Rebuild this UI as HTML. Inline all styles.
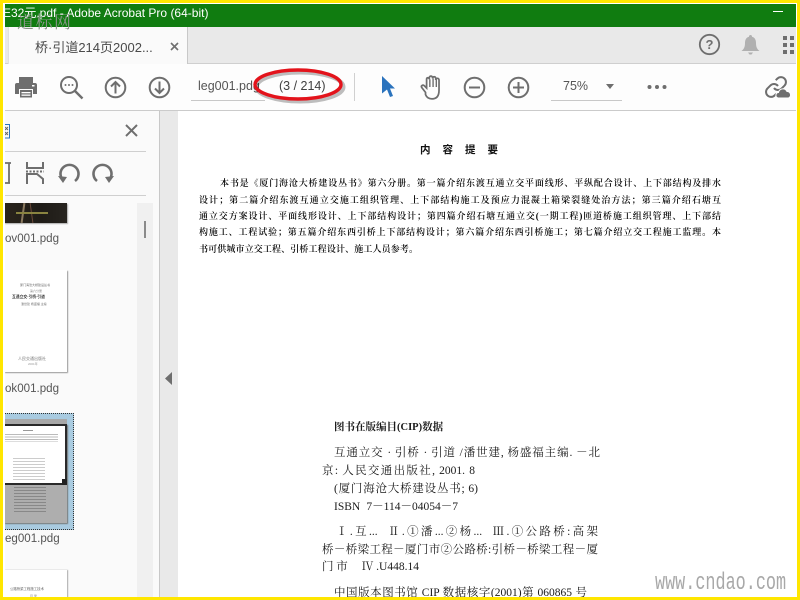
<!DOCTYPE html>
<html><head><meta charset="utf-8">
<style>
html,body{margin:0;padding:0;width:800px;height:600px;overflow:hidden;background:#fff;font-family:"Liberation Sans","Noto Sans CJK SC",sans-serif}
.a{position:absolute;white-space:nowrap}
.doc{font-family:"Liberation Serif","Noto Serif CJK SC",serif;color:#111}
.p1{font-size:9px;line-height:17px;color:#000;font-weight:600;white-space:normal;text-align:justify;text-align-last:justify}
.p2{font-size:11.5px;line-height:18px;color:#1a1a1a;white-space:normal;text-align:justify;text-align-last:justify}
.lbl{font-size:12.3px;color:#555;transform:scaleX(.94);transform-origin:left top}
</style></head><body>
<div class="a" style="left:0;top:0;width:800px;height:600px;overflow:hidden">
<div class="a" style="left:4px;top:4px;width:793px;height:23px;background:#107c10"></div>
<div class="a" style="left:3px;top:4px;color:#fff;font-size:12px;line-height:19px;width:300px;overflow:hidden">E32元.pdf - Adobe Acrobat Pro (64-bit)</div>
<div class="a" style="left:773px;top:10.5px;width:10px;height:1px;background:#fff"></div>

<div class="a" style="left:4px;top:27px;width:793px;height:36px;background:#e9e9e9;border-bottom:1px solid #cfcfcf"></div>
<div class="a" style="left:8px;top:27px;width:178px;height:37px;background:#fafafa;border-right:1px solid #c8c8c8;border-left:1px solid #e0e0e0"></div>
<div class="a" style="left:17px;top:13px;color:#8a968a;font-size:17px;letter-spacing:1.500px;font-family:'Liberation Serif','Noto Serif CJK SC',serif;line-height:20px">道标网</div>
<div class="a" style="left:35px;top:37px;font-size:13px;color:#4a4a4a">桥·引道214页2002...</div>
<svg class="a" style="left:170px;top:42px" width="9" height="9" viewBox="0 0 9 9"><path d="M1 1L8 8M8 1L1 8" stroke="#707070" stroke-width="1.6"/></svg>

<svg class="a" style="left:698px;top:33px" width="23" height="23" viewBox="0 0 23 23"><circle cx="11.5" cy="11.5" r="9.7" fill="none" stroke="#6e6e6e" stroke-width="1.8"/><text x="11.5" y="16" text-anchor="middle" font-size="13" font-weight="bold" fill="#6e6e6e" font-family="Liberation Sans">?</text></svg>
<svg class="a" style="left:741px;top:34px" width="19" height="22" viewBox="0 0 19 22"><path d="M9.5 1a1.500 1.500 0 0 1 1.500 1.700C14 3.500 15 6 15 9c0 4 1 6 3.500 8H.5C3 15 4 13 4 9c0-3 1-5.500 4-6.300A1.500 1.500 0 0 1 9.500 1z" fill="#b0b0b0"/><path d="M7 18.500h5l-1.500 2h-2z" fill="#b0b0b0"/></svg>
<svg class="a" style="left:783px;top:36px" width="12" height="18" viewBox="0 0 12 18"><g fill="#6e6e6e"><rect x="0" width="4" height="4"/><rect x="7" width="4" height="4"/><rect x="0" y="7" width="4" height="4"/><rect x="7" y="7" width="4" height="4"/><rect x="0" y="14" width="4" height="4"/><rect x="7" y="14" width="4" height="4"/></g></svg>

<div class="a" style="left:4px;top:64px;width:793px;height:46px;background:#fdfdfd;border-bottom:1px solid #cbcbcb"></div>

<svg class="a" style="left:14px;top:75px" width="24" height="24" viewBox="0 0 24 24" fill="#6e6e6e"><path d="M5 2h14v6H5z"/><path d="M3 8h18a2 2 0 0 1 2 2v9h-4v-5H5v5H1v-9a2 2 0 0 1 2-2z"/><rect x="6" y="15" width="12" height="7.500"/><rect x="7.500" y="17" width="9" height="1.300" fill="#fff"/><rect x="7.500" y="19.500" width="9" height="1.300" fill="#fff"/><rect x="18" y="10" width="2.500" height="1.500" fill="#fff"/></svg>
<svg class="a" style="left:59px;top:75px" width="25" height="25" viewBox="0 0 25 25"><circle cx="10" cy="10" r="8" fill="none" stroke="#6e6e6e" stroke-width="2"/><path d="M16 16l7.500 7.500" stroke="#6e6e6e" stroke-width="2.400"/><g fill="#6e6e6e"><circle cx="6.500" cy="10" r="1"/><circle cx="10" cy="10" r="1"/><circle cx="13.500" cy="10" r="1"/></g></svg>
<svg class="a" style="left:104px;top:76px" width="23" height="23" viewBox="0 0 23 23"><circle cx="11.500" cy="11.500" r="9.800" fill="none" stroke="#6e6e6e" stroke-width="2"/><path d="M11.500 17.500V6M7 10.500l4.500-4.500 4.500 4.500" fill="none" stroke="#6e6e6e" stroke-width="2"/></svg>
<svg class="a" style="left:148px;top:76px" width="23" height="23" viewBox="0 0 23 23"><circle cx="11.500" cy="11.500" r="9.800" fill="none" stroke="#6e6e6e" stroke-width="2"/><path d="M11.500 5.500V17M7 12.500l4.500 4.500 4.500-4.500" fill="none" stroke="#6e6e6e" stroke-width="2"/></svg>

<div class="a" style="left:198px;top:79px;font-size:12.500px;color:#555">leg001.pdg</div>
<div class="a" style="left:191px;top:100px;width:74px;height:1px;background:#c8c8c8"></div>
<svg class="a" style="left:248px;top:66px" width="104" height="42" viewBox="0 0 104 42"><ellipse cx="52" cy="21" rx="43.500" ry="14.500" fill="none" stroke="#000" stroke-opacity=".25" stroke-width="4"/><ellipse cx="50" cy="18.500" rx="43" ry="14.500" fill="none" stroke="#e3131b" stroke-width="3.400"/></svg>
<div class="a" style="left:279px;top:79px;font-size:12.500px;color:#3f3f3f">(3 / 214)</div>
<div class="a" style="left:354px;top:73px;width:1px;height:28px;background:#d0d0d0"></div>
<svg class="a" style="left:381px;top:75px" width="15" height="23" viewBox="0 0 15 23"><path d="M1 1l13 12.500H9l3 7.500-3 1-3-7.500-5 4z" fill="#2b73bd"/></svg>
<svg class="a" style="left:419px;top:74px" width="26" height="27" viewBox="0 0 24 25"><path d="M6 17l-3.500-4.500c-1-1.500 1-3 2.500-1.500l2 2V5c0-2 2.500-2 2.500 0V3.500c0-2 3-2 3 0V4c0-2 3-2 3 0v1.500c0-2 3-2 3 0V15c0 5-2 8-6.500 8-3 0-5-1.500-6-4z" fill="none" stroke="#6e6e6e" stroke-width="1.600"/><path d="M10 5v7M13 4v8M16 5v7" stroke="#6e6e6e" stroke-width="1.300"/></svg>
<svg class="a" style="left:463px;top:76px" width="23" height="23" viewBox="0 0 23 23"><circle cx="11.500" cy="11.500" r="9.800" fill="none" stroke="#6e6e6e" stroke-width="2"/><path d="M6 11.500h11" stroke="#6e6e6e" stroke-width="2"/></svg>
<svg class="a" style="left:507px;top:76px" width="23" height="23" viewBox="0 0 23 23"><circle cx="11.500" cy="11.500" r="9.800" fill="none" stroke="#6e6e6e" stroke-width="2"/><path d="M6 11.500h11M11.500 6v11" stroke="#6e6e6e" stroke-width="2"/></svg>
<div class="a" style="left:563px;top:79px;font-size:12.500px;color:#555">75%</div>
<div class="a" style="left:551px;top:100px;width:71px;height:1px;background:#c8c8c8"></div>
<svg class="a" style="left:606px;top:84px" width="10" height="6" viewBox="0 0 10 6"><path d="M0 0h8L4 5z" fill="#6e6e6e"/></svg>
<svg class="a" style="left:647px;top:84px" width="20" height="6" viewBox="0 0 20 6" fill="#6e6e6e"><circle cx="2.500" cy="3" r="2"/><circle cx="10" cy="3" r="2"/><circle cx="17.500" cy="3" r="2"/></svg>
<svg class="a" style="left:764px;top:75px" width="27" height="24" viewBox="0 0 27 24"><g fill="none" stroke="#6e6e6e" stroke-width="2"><path d="M10 13a5 5 0 0 0 7.540.54l3-3a5 5 0 0 0-7.070-7.070l-1.720 1.710"/><path d="M14 11a5 5 0 0 0-7.540-.54l-3 3a5 5 0 0 0 7.070 7.070l1.710-1.710"/></g><path d="M14 23a2.800 2.800 0 0 1 .5-5.500 4.500 4.500 0 0 1 8.500-1 3.400 3.400 0 0 1 1.500 6.500z" fill="#6e6e6e" stroke="#fdfdfd" stroke-width="1"/></svg>

<!-- left panel -->
<div class="a" style="left:4px;top:111px;width:155px;height:489px;background:#fafafa;border-right:1px solid #c8c8c8"></div>
<div class="a" style="left:160px;top:111px;width:18px;height:489px;background:#e9e9e9"></div>
<svg class="a" style="left:165px;top:372px" width="8" height="13" viewBox="0 0 8 13"><path d="M7 0v13L0 6.500z" fill="#6e6e6e"/></svg>
<svg class="a" style="left:4px;top:124px" width="7" height="15" viewBox="0 0 7 15"><path d="M0 .5h5.500v13.500H0" fill="none" stroke="#2b73bd"/><path d="M1 3l3 3M4 3L1 6M1 8l3 3M4 8l-3 3" stroke="#666" stroke-width="1"/></svg>
<svg class="a" style="left:125px;top:124px" width="13" height="13" viewBox="0 0 13 13"><path d="M1 1l11 11M12 1L1 12" stroke="#6e6e6e" stroke-width="2"/></svg>
<div class="a" style="left:4px;top:151px;width:142px;height:1px;background:#cfcfcf"></div>
<div class="a" style="left:4px;top:195px;width:142px;height:1px;background:#cfcfcf"></div>
<svg class="a" style="left:4px;top:162px" width="7" height="22" viewBox="0 0 7 22"><path d="M1 1h6M5 1v20M1 21h5" fill="none" stroke="#6e6e6e" stroke-width="1.800"/></svg>
<svg class="a" style="left:26px;top:162px" width="18" height="22" viewBox="0 0 18 22"><path d="M1 0v6h16V0M1 22V12h10l6 5v5" fill="none" stroke="#6e6e6e" stroke-width="2"/><path d="M0 9.500h18" stroke="#6e6e6e" stroke-width="2" stroke-dasharray="2 1.500"/></svg>
<svg class="a" style="left:58px;top:163px" width="22" height="21" viewBox="0 0 22 21"><path d="M6 18A9 9 0 1 1 17 18" fill="none" stroke="#6e6e6e" stroke-width="2.600"/><path d="M0 13l9 1-4 6z" fill="#6e6e6e"/></svg>
<svg class="a" style="left:92px;top:163px" width="22" height="21" viewBox="0 0 22 21"><path d="M5 18A9 9 0 1 1 16 18" fill="none" stroke="#6e6e6e" stroke-width="2.600"/><path d="M22 13l-9 1 4 6z" fill="#6e6e6e"/></svg>

<div class="a" style="left:137px;top:203px;width:16px;height:397px;background:#f0f0f0"></div>
<div class="a" style="left:144px;top:221px;width:2px;height:17px;background:#8a8a8a"></div>

<!-- thumbs -->
<div class="a" style="left:4px;top:203px;width:63px;height:20px;background:linear-gradient(90deg,#2a241c,#1f1c17 60%,#27241f);box-shadow:1px 1px 1px #aaa;overflow:hidden"><div style="position:absolute;left:18px;top:0;width:2px;height:20px;background:#8b7a60;transform:rotate(8deg)"></div><div style="position:absolute;left:27px;top:0;width:1px;height:20px;background:#6b4a3a;transform:rotate(-8deg)"></div><div style="position:absolute;left:12px;top:9px;width:32px;height:2px;background:#8a8440"></div></div>
<div class="a lbl" style="left:5px;top:231px">ov001.pdg</div>

<div class="a" style="left:4px;top:270px;width:63px;height:102px;background:#fff;box-shadow:1px 1px 1px #999;overflow:hidden">
<div class="a" style="left:16px;top:13px;font-size:3px;color:#666">厦门海沧大桥建设丛书</div>
<div class="a" style="left:26px;top:19px;font-size:3px;color:#888">第六分册</div>
<div class="a" style="left:8px;top:25px;font-size:3.800px;font-weight:bold;color:#333">互通立交·引桥·引道</div>
<div class="a" style="left:17px;top:32px;font-size:3px;color:#777">潘世建 杨盛福 主编</div>
<div class="a" style="left:14px;top:86px;font-size:4px;color:#777">人民交通出版社</div>
<div class="a" style="left:24px;top:92px;font-size:3px;color:#999">2001年</div>
</div>
<div class="a lbl" style="left:5px;top:381px">ok001.pdg</div>

<div class="a" style="left:4px;top:413px;width:69px;height:115px;background:#a9cbe0;border:1px dotted #333;border-left:0"></div>
<div class="a" style="left:4px;top:419px;width:63px;height:5px;background:#a8a8a8"></div>
<div class="a" style="left:4px;top:424px;width:63px;height:99px;background:#aeaeae;box-shadow:1px 1px 1px #777;overflow:hidden">
<div class="a" style="left:0;top:0;width:63px;height:61px;background:#fff;border:2.500px solid #2a2a2a;border-left:0;box-sizing:border-box"></div>
<div class="a" style="left:58px;top:55px;width:5px;height:6px;background:#222"></div>
<div class="a" style="left:19px;top:6px;width:10px;height:1px;background:#999"></div>
<div class="a" style="left:1px;top:10px;width:53px;height:8px;background:repeating-linear-gradient(#bbb 0 1px,#fff 1px 2.500px)"></div>
<div class="a" style="left:9px;top:34px;width:32px;height:22px;background:repeating-linear-gradient(#ccc 0 1px,#fff 1px 3px)"></div>
<div class="a" style="left:10px;top:63px;width:32px;height:26px;background:repeating-linear-gradient(#888 0 1px,#aeaeae 1px 3px)"></div>
</div>
<div class="a lbl" style="left:5px;top:531px">eg001.pdg</div>
<div class="a" style="left:4px;top:570px;width:63px;height:30px;background:#fff;box-shadow:1px 0 1px #aaa">
<div class="a" style="left:6px;top:16px;font-size:3.400px;color:#666">公路桥梁工程施工技术</div>
<div class="a" style="left:26px;top:24px;font-size:3px;color:#888">目 录</div>
</div>

<!-- document page -->
<div class="a" style="left:178px;top:111px;width:619px;height:489px;background:#fff"></div>
<div class="a doc" style="left:420px;top:142px;font-size:10.500px;font-weight:bold;letter-spacing:12px;font-family:'Liberation Sans','Noto Sans CJK SC',sans-serif;color:#111">内容提要</div>
<div class="a doc p1" style="left:220px;top:175px;width:501px">本书是《厦门海沧大桥建设丛书》第六分册。第一篇介绍东渡互通立交平面线形、平纵配合设计、上下部结构及排水</div>
<div class="a doc p1" style="left:199px;top:191.500px;width:522px">设计；第二篇介绍东渡互通立交施工组织管理、上下部结构施工及预应力混凝土箱梁裂缝处治方法；第三篇介绍石塘互</div>
<div class="a doc p1" style="left:199px;top:207.700px;width:522px">通立交方案设计、平面线形设计、上下部结构设计；第四篇介绍石塘互通立交(一期工程)匝道桥施工组织管理、上下部结</div>
<div class="a doc p1" style="left:199px;top:224px;width:522px">构施工、工程试验；第五篇介绍东西引桥上下部结构设计；第六篇介绍东西引桥施工；第七篇介绍立交工程施工监理。本</div>
<div class="a doc p1" style="left:199px;top:240.500px;width:219px">书可供城市立交工程、引桥工程设计、施工人员参考。</div>

<div class="a doc" style="left:334px;top:419px;font-weight:bold;font-size:10.500px;line-height:18px;color:#1a1a1a">图书在版编目(CIP)数据</div>
<div class="a doc p2" style="left:334px;top:444px;width:266px">互通立交 · 引桥 · 引道 /潘世建, 杨盛福主编. －北</div>
<div class="a doc p2" style="left:322px;top:462px;width:153px">京: 人民交通出版社, 2001. 8</div>
<div class="a doc p2" style="left:334px;top:480px;width:144px">(厦门海沧大桥建设丛书; 6)</div>
<div class="a doc p2" style="left:334px;top:498px;width:124px">ISBN 7－114－04054－7</div>
<div class="a doc p2" style="left:336px;top:523px;width:262px">Ⅰ.互...&nbsp;&nbsp;Ⅱ.①潘...②杨...&nbsp;&nbsp;Ⅲ.①公路桥:高架</div>
<div class="a doc p2" style="left:322px;top:541px;width:276px">桥－桥梁工程－厦门市②公路桥:引桥－桥梁工程－厦</div>
<div class="a doc p2" style="left:322px;top:558px;width:97px">门市&nbsp;&nbsp;Ⅳ.U448.14</div>
<div class="a doc p2" style="left:334px;top:584px;width:253px">中国版本图书馆 CIP 数据核字(2001)第 060865 号</div>

<div class="a" style="left:655px;top:570px;font-family:'Liberation Mono',monospace;font-size:24px;color:#a8a8a8;transform:scaleX(.7);transform-origin:left top">www.cndao.com</div>

<!-- yellow frame -->
<div class="a" style="left:0;top:0;width:800px;height:3px;background:#ffe600"></div>
<div class="a" style="left:0;top:3px;width:800px;height:1px;background:#fff"></div>
<div class="a" style="left:0;top:597px;width:800px;height:3px;background:#ffe600"></div>
<div class="a" style="left:0;top:0;width:3px;height:600px;background:#ffe600"></div>
<div class="a" style="left:3px;top:3px;width:2px;height:594px;background:#fff"></div>
<div class="a" style="left:797px;top:0;width:3px;height:600px;background:#ffe600"></div>
<div class="a" style="left:796px;top:3px;width:1px;height:594px;background:#fff"></div>
</div>
</body></html>
